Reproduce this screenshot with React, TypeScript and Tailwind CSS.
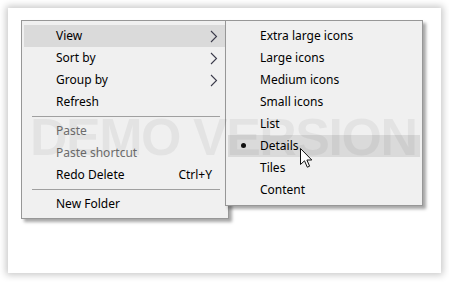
import React from "react";

const font = { fontFamily: '"Noto Sans", "Liberation Sans", sans-serif' };

function Chevron() {
  return (
    <svg width="8" height="13" viewBox="0 0 8 13" className="block">
      <path d="M1 1 L6.5 6.5 L1 12" fill="none" stroke="#3a3a4a" strokeWidth="1.1" />
    </svg>
  );
}

function Row({
  label,
  active,
  disabled,
  sub,
  shortcut,
  bullet,
}: {
  label: string;
  active?: boolean;
  disabled?: boolean;
  sub?: boolean;
  shortcut?: string;
  bullet?: boolean;
}) {
  return (
    <div
      className={`relative flex h-[22px] items-center pl-[32px] pr-[8px] text-[12px] leading-none ${
        active ? "bg-[#dadada]" : ""
      } ${disabled ? "text-[#6d6d6d]" : "text-black"}`}
    >
      {bullet && (
        <span className="absolute left-[13px] top-[8px] h-[5px] w-[5px] rounded-full bg-[#101010]" />
      )}
      <span className="flex-1 whitespace-nowrap">{label}</span>
      {shortcut && <span className="mr-[6px] whitespace-nowrap">{shortcut}</span>}
      {sub && <Chevron />}
    </div>
  );
}

function Sep() {
  return (
    <div className="flex h-[7px] items-start pt-[3px] pl-[8px] pr-[6px]">
      <div className="h-px w-full bg-[#a0a0a0]" />
    </div>
  );
}

export default function App() {
  return (
    <div className="h-[282px] w-[449px] bg-white pl-[8px] pt-[8px]" style={font}>
      <div className="relative h-[265px] w-[433px] bg-white shadow-[0_0_7px_2px_rgba(0,0,0,0.22)] pl-[13px] pt-[12px]">
        <div className="flex items-start">
          <div className="w-[208px] border border-[#979797] bg-[#f0f0f0] px-[2px] pt-[4px] pb-[3px] shadow-[3px_3px_3px_rgba(0,0,0,0.35)]">
            <Row label="View" active sub />
            <Row label="Sort by" sub />
            <Row label="Group by" sub />
            <Row label="Refresh" />
            <Sep />
            <Row label="Paste" disabled />
            <Row label="Paste shortcut" disabled />
            <Row label="Redo Delete" shortcut="Ctrl+Y" />
            <Sep />
            <Row label="New Folder" />
          </div>
          <div className="relative z-10 -ml-[4px] w-[198px] border border-[#979797] bg-[#f0f0f0] px-[2px] pt-[4px] pb-[4px] shadow-[3px_3px_3px_rgba(0,0,0,0.35)]">
            <Row label="Extra large icons" />
            <Row label="Large icons" />
            <Row label="Medium icons" />
            <Row label="Small icons" />
            <Row label="List" />
            <Row label="Details" active bullet />
            <Row label="Tiles" />
            <Row label="Content" />
          </div>
        </div>
        <div
          className="pointer-events-none absolute left-[22px] top-[103px] z-20 whitespace-nowrap text-[52px] font-bold leading-none tracking-[-1.5px] text-[rgba(0,0,0,0.05)]"
          style={{ fontFamily: '"Liberation Sans", sans-serif' }}
        >
          DEMO VERSION
        </div>
        <svg
          className="pointer-events-none absolute left-[292px] top-[140px] z-30"
          width="13"
          height="21"
          viewBox="0 0 13 21"
        >
          <path
            d="M0.5 0.5 L0.5 16.5 L4.5 12.8 L7.3 19.2 L9.6 18.2 L6.9 12 L11.8 12 Z"
            fill="white"
            stroke="#111"
            strokeWidth="1"
            strokeLinejoin="miter"
          />
        </svg>
      </div>
    </div>
  );
}
